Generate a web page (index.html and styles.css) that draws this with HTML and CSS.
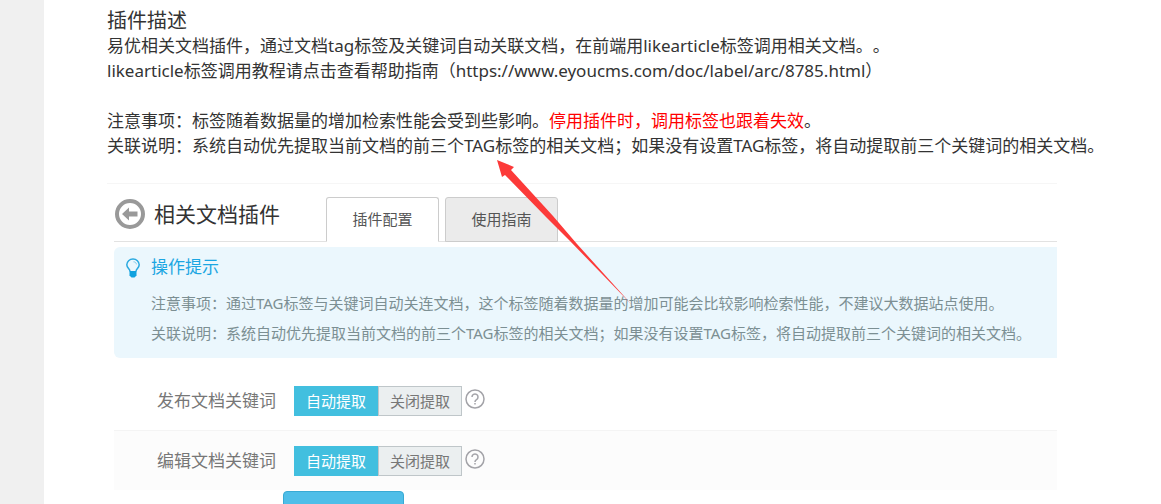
FILE: index.html
```html
<!DOCTYPE html>
<html lang="zh-CN">
<head>
<meta charset="utf-8">
<title>插件描述</title>
<link rel="stylesheet" href="styles.css">
</head>
<body>
<div class="page">
  <main class="article">
    <section class="description">
      <h1 class="description-title">插件描述</h1>
      <p>易优相关文档插件，通过文档tag标签及关键词自动关联文档，在前端用likearticle标签调用相关文档。。</p>
      <p>likearticle标签调用教程请点击查看帮助指南（https://www.eyoucms.com/doc/label/arc/8785.html）</p>
      <p class="gap-before">注意事项：标签随着数据量的增加检索性能会受到些影响。<span class="warning">停用插件时，调用标签也跟着失效</span>。</p>
      <p>关联说明：系统自动优先提取当前文档的前三个TAG标签的相关文档；如果没有设置TAG标签，将自动提取前三个关键词的相关文档。</p>
    </section>

    <section class="panel">
      <header class="panel-header">
        <a class="back" href="#">
          <svg width="32" height="32" viewBox="0 0 32 32">
            <circle cx="16" cy="16" r="13" fill="none" stroke="#999" stroke-width="4"/>
            <path d="M8 16l7-6.500v4h8.500v5h-8.500v4z" fill="#999"/>
          </svg>
        </a>
        <h2 class="panel-title">相关文档插件</h2>
        <nav class="tabs">
          <a class="tab tab-active" href="#">插件配置</a>
          <a class="tab" href="#">使用指南</a>
        </nav>
      </header>

      <div class="tips">
        <svg class="bulb" width="16" height="20" viewBox="0 0 16 20">
          <path d="M5 13.500C5 11 1.800 10 1.800 6.800a6.200 5.800 0 0 1 12.400 0C14.200 10 11 11 11 13.500" fill="none" stroke="#2aa9e0" stroke-width="1.500"/>
          <path d="M8.500 3.800c1.600 0 2.700 1 2.900 2.500" fill="none" stroke="#7fcaea" stroke-width="1"/>
          <path d="M4.500 13h7v4.500L9.500 19.500h-3l-2-2z" fill="#0fa2df"/>
        </svg>
        <div class="tips-body">
          <h3 class="tips-title">操作提示</h3>
          <p>注意事项：通过TAG标签与关键词自动关连文档，这个标签随着数据量的增加可能会比较影响检索性能，不建议大数据站点使用。</p>
          <p>关联说明：系统自动优先提取当前文档的前三个TAG标签的相关文档；如果没有设置TAG标签，将自动提取前三个关键词的相关文档。</p>
        </div>
      </div>

      <form class="settings">
        <div class="row">
          <span class="row-label">发布文档关键词</span>
          <div class="switch">
            <input type="radio" name="publish" id="publish-on" checked>
            <label for="publish-on">自动提取</label>
            <input type="radio" name="publish" id="publish-off">
            <label for="publish-off">关闭提取</label>
          </div>
          <button class="help" type="button">
            <svg width="20" height="20" viewBox="0 0 20 20" fill="none" stroke="#a3a3a8" stroke-width="1.500">
              <circle cx="10" cy="10" r="9"/>
              <path d="M7 8a3 3 0 1 1 4.500 2.600Q10 11.500 10 13"/>
              <path d="M10 14v1.500"/>
            </svg>
          </button>
        </div>
        <div class="row row-alt">
          <span class="row-label">编辑文档关键词</span>
          <div class="switch">
            <input type="radio" name="edit" id="edit-on" checked>
            <label for="edit-on">自动提取</label>
            <input type="radio" name="edit" id="edit-off">
            <label for="edit-off">关闭提取</label>
          </div>
          <button class="help" type="button">
            <svg width="20" height="20" viewBox="0 0 20 20" fill="none" stroke="#a3a3a8" stroke-width="1.500">
              <circle cx="10" cy="10" r="9"/>
              <path d="M7 8a3 3 0 1 1 4.500 2.600Q10 11.500 10 13"/>
              <path d="M10 14v1.500"/>
            </svg>
          </button>
        </div>
        <button class="submit" type="submit"></button>
      </form>

      <svg class="pointer" width="136" height="146" viewBox="0 0 136 146">
        <path d="M0 0L17 7L14 10L56 56L80 84L135 145L73 81L49 57L8 15L5 17Z" fill="#fc3a39"/>
      </svg>
    </section>
  </main>
</div>
</body>
</html>
```
FILE: styles.css
```css
* {
  box-sizing: border-box;
}

body {
  margin: 0;
  background: #f0f0f0;
  color: #333;
  font-family: "Noto Sans", "Noto Sans CJK SC", sans-serif;
  font-size: 17px;
  line-height: 25px;
  text-spacing-trim: space-all;
}

h1, h2, h3, p {
  margin: 0;
  font-weight: 400;
}

a {
  color: inherit;
  text-decoration: none;
}

.page {
  height: 100vh;
  padding-left: 44px;
  overflow: hidden;
}

.article {
  min-height: 100%;
  padding: 8px 0 0 63px;
  background: #fff;
}

.description-title {
  font-size: 20px;
  line-height: 25px;
}

.gap-before {
  margin-top: 25px;
}

.warning {
  color: #f00;
}

.panel {
  position: relative;
  margin: 25px 104px 0 0;
  padding-left: 7px;
  border-top: 1px solid #f6f6f6;
}

.panel-header {
  display: flex;
  align-items: flex-end;
  height: 58px;
  border-bottom: 1px solid #e2e2e2;
}

.back {
  display: flex;
  margin-bottom: 11px;
}

.panel-title {
  margin: 0 46px 11px 8px;
  font-size: 21px;
  line-height: 32px;
}

.tabs {
  display: flex;
  gap: 6px;
  margin-bottom: -1px;
}

.tab {
  width: 113px;
  height: 45px;
  border: 1px solid #ccc;
  border-radius: 3px 3px 0 0;
  background: #ebebeb;
  color: #555;
  font-size: 15px;
  line-height: 43px;
  text-align: center;
}

.tab-active {
  border-bottom-color: #fff;
  background: #fff;
}

.tips {
  display: flex;
  gap: 10px;
  margin-top: 5px;
  padding: 5px 11px 10px;
  border-radius: 6px 0 0 6px;
  background: #ebf7fd;
}

.bulb {
  flex: none;
  margin-top: 6px;
}

.tips-body {
  color: #7c8f93;
  font-size: 15px;
  line-height: 30px;
}

.tips-title {
  margin-bottom: 6px;
  color: #1ba6e2;
  font-size: 17px;
  line-height: 30px;
}

.settings {
  padding-top: 12px;
}

.row {
  display: flex;
  align-items: center;
  height: 60px;
  padding-left: 43px;
  border-top: 1px solid transparent;
}

.row-alt {
  border-top-color: #f4f4f4;
  background: #fcfcfc;
}

.row-label {
  width: 137px;
  color: #777;
}

.switch {
  display: flex;
}

.switch input {
  position: absolute;
  opacity: 0;
}

.switch label {
  width: 84px;
  height: 30px;
  border: 1px solid #bfc6c9;
  background: #ebeff0;
  color: #777;
  font-size: 15px;
  line-height: 29px;
  text-align: center;
}

.switch input:checked + label {
  border-color: #42bfdf;
  background: #42bfdf;
  color: #fff;
}

.help {
  display: flex;
  margin: 0 0 4px 3px;
  padding: 0;
  border: 0;
  background: none;
}

.submit {
  display: block;
  width: 121px;
  height: 40px;
  margin: 1px 0 0 169px;
  border: 1px solid #39aad4;
  border-radius: 4px;
  background: #4fbee8;
}

.pointer {
  position: absolute;
  top: -24px;
  left: 390px;
}
```
